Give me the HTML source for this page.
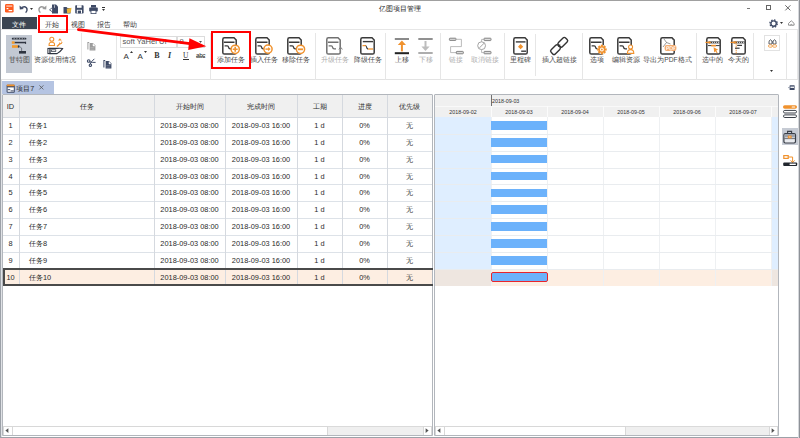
<!DOCTYPE html><html><head><meta charset="utf-8"><style>
*{box-sizing:border-box;margin:0;padding:0}
html,body{width:800px;height:438px;overflow:hidden;background:#fff}
body{position:relative;font-family:"Liberation Sans",sans-serif;font-size:7.2px;color:#333}
.a{position:absolute}
.t{position:absolute;white-space:nowrap;line-height:1}
.row{position:absolute;left:0;width:433px;height:16.87px}
.c{position:absolute;top:1px;white-space:nowrap;line-height:16.87px;text-align:center;color:#2a2a2a;font-size:7.4px}
.hl{position:absolute;height:1px;background:#dde2e8}
.vl{position:absolute;width:1px;background:#dde2e8}
.lbl{position:absolute;white-space:nowrap;line-height:1;color:#444;font-size:7.2px;top:56px}
.dis{color:#aaa}
.sep{position:absolute;width:1px;background:#e6e6e6;top:33px;height:45px}
svg{position:absolute;overflow:visible}
</style></head><body>
<div class="a" style="left:0;top:0;width:800px;height:1px;background:#a0a0a0"></div>
<div class="a" style="left:0;top:0;width:1px;height:438px;background:#9ca1a8"></div><div class="a" style="left:1px;top:80px;width:1px;height:358px;background:#e0e2e6"></div>
<div class="a" style="left:0;top:437px;width:800px;height:1px;background:#9ca1a8"></div>
<div class="t" style="left:379px;top:6px;font-size:6.8px;color:#222">亿图项目管理</div>
<div class="a" style="left:2px;top:17px;width:35px;height:13px;background:#3b4552"></div>
<div class="t" style="left:12px;top:20.7px;color:#fff;font-size:7px">文件</div>
<div class="t" style="left:45px;top:20.7px;color:#333;font-size:7px">开始</div>
<div class="t" style="left:71px;top:20.7px;color:#333;font-size:7px">视图</div>
<div class="t" style="left:97px;top:20.7px;color:#333;font-size:7px">报告</div>
<div class="t" style="left:123px;top:20.7px;color:#333;font-size:7px">帮助</div>
<div class="a" style="left:1px;top:29px;width:799px;height:1px;background:#e6e6e6"></div>
<div class="a" style="left:1px;top:79px;width:799px;height:1px;background:#e3e3e3"></div>
<div class="a" style="left:81.0px;top:33px;width:1px;height:47px;background:#e6e6e6"></div>
<div class="a" style="left:115.5px;top:33px;width:1px;height:47px;background:#e6e6e6"></div>
<div class="a" style="left:209.5px;top:33px;width:1px;height:47px;background:#e6e6e6"></div>
<div class="a" style="left:314.5px;top:33px;width:1px;height:47px;background:#e6e6e6"></div>
<div class="a" style="left:384.5px;top:33px;width:1px;height:47px;background:#e6e6e6"></div>
<div class="a" style="left:439.5px;top:33px;width:1px;height:47px;background:#e6e6e6"></div>
<div class="a" style="left:503.5px;top:33px;width:1px;height:47px;background:#e6e6e6"></div>
<div class="a" style="left:534.5px;top:34px;width:1px;height:42px;background:#e6e6e6"></div>
<div class="a" style="left:581.5px;top:33px;width:1px;height:47px;background:#e6e6e6"></div>
<div class="a" style="left:695.5px;top:33px;width:1px;height:47px;background:#e6e6e6"></div>
<div class="a" style="left:753.0px;top:33px;width:1px;height:47px;background:#e6e6e6"></div>
<div class="a" style="left:785.5px;top:33px;width:1px;height:47px;background:#e6e6e6"></div>
<div class="a" style="left:797px;top:30px;width:1px;height:49px;background:#e6e6e6"></div>
<div class="a" style="left:6px;top:35px;width:26px;height:38px;background:#c3c9d3"></div>
<svg style="left:11px;top:37px" width="17" height="18" viewBox="0 0 17 18"><rect x="0.8" y="0.8" width="14.6" height="1.8" rx="0.9" fill="#2e3440"/><path d="M2.6,1.7 H14" stroke="#fff" stroke-width="0.6" stroke-dasharray="1.2,1.5"/><rect x="3.4" y="4.8" width="11.6" height="1.5" fill="#2e3440"/><path d="M14.6,4.8 V7" stroke="#2e3440" stroke-width="0.9"/><rect x="0.8" y="4.3" width="2.8" height="2.5" fill="#f39a2b"/><rect x="1" y="8.2" width="6" height="2.6" fill="#f39a2b"/><rect x="6.8" y="8.2" width="1.8" height="2.6" rx="1" fill="#2e3440"/><path d="M8.6,9.6 L10.6,11 V14" stroke="#6a707a" stroke-width="0.9" fill="none"/><rect x="8" y="14" width="7" height="2.6" fill="#2e3440"/></svg>
<div class="t" style="left:-11px;width:60px;text-align:center;top:57px;font-size:6.7px;color:#4a4a4a">甘特图</div>
<svg style="left:44px;top:34px" width="22" height="22" viewBox="0 0 22 22"><circle cx="7.8" cy="5.2" r="2" fill="none" stroke="#f0922e" stroke-width="1.1"/><path d="M5.1,11.5 V10.2 Q5.1,8.2 7.8,8.2 Q10.5,8.2 10.5,10.2 V11.5 Z" fill="none" stroke="#f0922e" stroke-width="1.1"/><path d="M14,6.5 L15.9,4.3 L17.8,6.5 Z" fill="#f0922e"/><path d="M13,12.6 L16.4,9.2" stroke="#f0922e" stroke-width="1.4"/><path d="M15.6,8.6 L16.6,10 L18,9 L17.6,7.6" fill="none" stroke="#f0922e" stroke-width="1"/><path d="M6,14.4 H12.6 Q17,14 18.6,14.6 Q17,17 13,19.6 H6 Z" fill="#fff" stroke="#2e3440" stroke-width="1.1"/><rect x="3.4" y="13.9" width="2.8" height="6.2" fill="#2e3440"/><rect x="4.4" y="15" width="0.9" height="4" fill="#fff"/><rect x="7.4" y="15.8" width="4.4" height="1.6" fill="#fff" stroke="#2e3440" stroke-width="0.7"/></svg>
<div class="t" style="left:25px;width:60px;text-align:center;top:57px;font-size:6.7px;color:#4a4a4a">资源使用情况</div>
<svg style="left:87.2px;top:41px" width="10" height="10" viewBox="0 0 10 10"><path d="M0.4,1 H2.2 V2 H1.4 V8.4 H0.4 Z" fill="#9c9c9c"/><path d="M2.6,2 H6 L8.4,4.4 V9.6 H2.6 Z" fill="#9c9c9c"/><path d="M6,2.6 V4.9 H8" fill="#fff" stroke="#fff" stroke-width="0.5"/><path d="M3.4,6.6 H7.4 M3.4,8.2 H7.4" stroke="#fff" stroke-width="0.35" opacity="0.6"/></svg>
<svg style="left:102.6px;top:58.6px" width="10" height="10" viewBox="0 0 10 10"><path d="M0.4,1 H2.2 V2 H1.4 V8.4 H0.4 Z" fill="#3e4a66"/><path d="M2.6,2 H6 L8.4,4.4 V9.6 H2.6 Z" fill="#3e4a66"/><path d="M6,2.6 V4.9 H8" fill="#fff" stroke="#fff" stroke-width="0.5"/><path d="M3.4,6.6 H7.4 M3.4,8.2 H7.4" stroke="#fff" stroke-width="0.35" opacity="0.6"/></svg>
<svg style="left:87px;top:58.4px" width="10" height="9" viewBox="0 0 10 9"><circle cx="1.7" cy="3" r="1.3" fill="none" stroke="#3e4a66" stroke-width="1.1"/><circle cx="3.4" cy="7.2" r="1.2" fill="none" stroke="#3e4a66" stroke-width="1.1"/><path d="M2.6,3.8 Q5,4.6 8.6,4.4 M3.2,6 L4.6,3.6 L7.4,0.8" stroke="#3e4a66" stroke-width="1" fill="none"/></svg>
<div class="a" style="left:120px;top:35.5px;width:57px;height:12px;border:1px solid #dcdcdc;background:#fff;overflow:hidden"><div class="t" style="left:1.5px;top:1.3px;font-size:7.6px;color:#555">soft YaHei UI</div></div>
<div class="a" style="left:176.5px;top:35.5px;width:28px;height:12px;border:1px solid #dcdcdc;background:#fff"><div class="t" style="left:2px;top:1.3px;font-size:7.6px;color:#555">9</div><svg style="left:21.5px;top:4.5px" width="4" height="3"><path d="M0,0 H3 L1.5,2 Z" fill="#555"/></svg></div>
<div class="t" style="left:123.5px;top:52.5px;font-size:8px;color:#333">A</div>
<svg style="left:130px;top:50.8px" width="4" height="3" viewBox="0 0 4 3"><path d="M0,2 H3 L1.5,0 Z" fill="#333"/></svg>
<div class="t" style="left:137.5px;top:52.5px;font-size:8px;color:#333">A</div>
<svg style="left:144px;top:50.8px" width="4" height="3" viewBox="0 0 4 3"><path d="M0,0 H3 L1.5,2 Z" fill="#333"/></svg>
<div class="t" style="left:154.3px;top:52px;font-size:8px;color:#333;font-weight:bold;font-family:'Liberation Serif',serif">B</div>
<div class="t" style="left:168px;top:52px;font-size:8px;color:#333;font-weight:bold;font-style:italic;font-family:'Liberation Serif',serif">I</div>
<div class="t" style="left:183px;top:51.5px;font-size:7.5px;color:#333;font-family:'Liberation Serif',serif">U</div>
<div class="a" style="left:183px;top:58.6px;width:5.5px;height:0.7px;background:#333"></div>
<div class="t" style="left:196px;top:53px;font-size:6.4px;color:#333;letter-spacing:-0.4px">abc</div>
<div class="a" style="left:196px;top:56px;width:9px;height:0.6px;background:#777"></div>
<svg style="left:222px;top:37.3px" width="16" height="18" viewBox="0 0 16 18"><path d="M2.4,0.8 H12 L14.2,3 V15.4 Q14.2,17 12.6,17 H2.4 Q0.8,17 0.8,15.4 V2.4 Q0.8,0.8 2.4,0.8 Z" fill="#fff" stroke="#3a3a3a" stroke-width="1.5"/><path d="M2.6,6 V5.2 H11.8 V6" stroke="#3a3a3a" stroke-width="1.4" fill="none"/><path d="M2.6,8.8 H5.2 Q6.4,8.8 6.6,10.4 Q6.8,11.8 8.2,11.8 H10" stroke="#3a3a3a" stroke-width="1.3" fill="none"/><circle cx="13.2" cy="12.3" r="4.1" fill="#fff" stroke="#f0922e" stroke-width="1.5"/><path d="M13.2,9.8 V14.8 M10.7,12.3 H15.7" stroke="#f0922e" stroke-width="1.6"/></svg>
<div class="t" style="left:200.5px;width:60px;text-align:center;top:57px;font-size:6.7px;color:#4a4a4a">添加任务</div>
<svg style="left:254.5px;top:37.3px" width="16" height="18" viewBox="0 0 16 18"><path d="M2.4,0.8 H12 L14.2,3 V15.4 Q14.2,17 12.6,17 H2.4 Q0.8,17 0.8,15.4 V2.4 Q0.8,0.8 2.4,0.8 Z" fill="#fff" stroke="#3a3a3a" stroke-width="1.5"/><path d="M2.6,6 V5.2 H11.8 V6" stroke="#3a3a3a" stroke-width="1.4" fill="none"/><path d="M2.6,8.8 H5.2 Q6.4,8.8 6.6,10.4 Q6.8,11.8 8.2,11.8 H10" stroke="#3a3a3a" stroke-width="1.3" fill="none"/><circle cx="13" cy="12.1" r="4.1" fill="#fff" stroke="#f0922e" stroke-width="1.5"/><path d="M10.4,12.1 H14.2" stroke="#f0922e" stroke-width="1.4"/><path d="M13.2,9.9 L15.6,12.1 L13.2,14.3 Z" fill="#f0922e"/></svg>
<div class="t" style="left:234px;width:60px;text-align:center;top:57px;font-size:6.7px;color:#4a4a4a">插入任务</div>
<svg style="left:287px;top:37.3px" width="16" height="18" viewBox="0 0 16 18"><path d="M2.4,0.8 H12 L14.2,3 V15.4 Q14.2,17 12.6,17 H2.4 Q0.8,17 0.8,15.4 V2.4 Q0.8,0.8 2.4,0.8 Z" fill="#fff" stroke="#3a3a3a" stroke-width="1.5"/><path d="M2.6,6 V5.2 H11.8 V6" stroke="#3a3a3a" stroke-width="1.4" fill="none"/><path d="M2.6,8.8 H5.2 Q6.4,8.8 6.6,10.4 Q6.8,11.8 8.2,11.8 H10" stroke="#3a3a3a" stroke-width="1.3" fill="none"/><circle cx="13.5" cy="12.3" r="4.1" fill="#fff" stroke="#f0922e" stroke-width="1.5"/><path d="M11,12.3 H16" stroke="#f0922e" stroke-width="1.8"/></svg>
<div class="t" style="left:265.5px;width:60px;text-align:center;top:57px;font-size:6.7px;color:#4a4a4a">移除任务</div>
<svg style="left:325.8px;top:37.3px" width="16" height="18" viewBox="0 0 16 18"><path d="M2.4,0.8 H12 L14.2,3 V15.4 Q14.2,17 12.6,17 H2.4 Q0.8,17 0.8,15.4 V2.4 Q0.8,0.8 2.4,0.8 Z" fill="#fff" stroke="#707070" stroke-width="1.5"/><path d="M2.6,6 V5.2 H11.8 V6" stroke="#707070" stroke-width="1.4" fill="none"/><path d="M2.6,8.8 H5.2 Q6.4,8.8 6.6,10.4 Q6.8,11.8 8.2,11.8 H10" stroke="#707070" stroke-width="1.3" fill="none"/><path d="M14.6,16.5 V10.8" stroke="#808080" stroke-width="1"/><path d="M12.8,12.4 L14.6,10.2 L16.4,12.4" stroke="#808080" stroke-width="1" fill="none"/></svg>
<div class="t" style="left:304.5px;width:60px;text-align:center;top:57px;font-size:6.7px;color:#acacac">升级任务</div>
<svg style="left:359.5px;top:37.3px" width="16" height="18" viewBox="0 0 16 18"><path d="M2.4,0.8 H12 L14.2,3 V15.4 Q14.2,17 12.6,17 H2.4 Q0.8,17 0.8,15.4 V2.4 Q0.8,0.8 2.4,0.8 Z" fill="#fff" stroke="#3a3a3a" stroke-width="1.5"/><path d="M2.8,4.6 H13" stroke="#3a3a3a" stroke-width="1.4"/><path d="M2.5,8.6 H6" stroke="#f0922e" stroke-width="1.3"/><path d="M6,8.6 L7.2,12 H8" stroke="#3a3a3a" stroke-width="1"/><path d="M8,12 H13" stroke="#f0922e" stroke-width="1.3"/></svg>
<div class="t" style="left:337.5px;width:60px;text-align:center;top:57px;font-size:6.7px;color:#4a4a4a">降级任务</div>
<svg style="left:394px;top:37px" width="16" height="18" viewBox="0 0 16 18"><rect x="0.8" y="1.2" width="14.2" height="1.6" fill="#6e6e6e"/><path d="M3.8,8 L7.9,3.6 L12,8 Z" fill="#f0922e"/><rect x="6.9" y="7" width="2" height="7.4" fill="#f0922e"/><rect x="0.8" y="15.2" width="14.2" height="2" fill="#222"/></svg>
<div class="t" style="left:372px;width:60px;text-align:center;top:57px;font-size:6.7px;color:#4a4a4a">上移</div>
<svg style="left:418px;top:37px" width="16" height="18" viewBox="0 0 16 18"><rect x="0.3" y="1.2" width="14.4" height="1.6" fill="#777"/><rect x="6.5" y="4" width="2" height="6.5" fill="#bdbdbd"/><path d="M3.4,9.5 L7.5,14 L11.6,9.5 Z" fill="#bdbdbd"/><rect x="0.3" y="15.2" width="14.4" height="1.6" fill="#999"/></svg>
<div class="t" style="left:396px;width:60px;text-align:center;top:57px;font-size:6.7px;color:#acacac">下移</div>
<svg style="left:448px;top:37px" width="17" height="18" viewBox="0 0 17 18"><rect x="1.4" y="1.2" width="6.6" height="2.2" rx="0.6" fill="#ddd" stroke="#777" stroke-width="0.9"/><path d="M8,2.3 H13.4 V9.6 H2.6 V15.6 H8.3" stroke="#aaa" stroke-width="0.8" fill="none"/><rect x="8.3" y="14.4" width="7" height="2.4" rx="0.6" fill="#ddd" stroke="#777" stroke-width="0.9"/></svg>
<div class="t" style="left:426px;width:60px;text-align:center;top:57px;font-size:6.7px;color:#acacac">链接</div>
<svg style="left:475px;top:37px" width="18" height="18" viewBox="0 0 18 18"><rect x="9" y="1.2" width="7" height="2.4" rx="0.6" fill="#ddd" stroke="#777" stroke-width="0.9"/><rect x="9" y="14.4" width="7" height="2.4" rx="0.6" fill="#ddd" stroke="#777" stroke-width="0.9"/><path d="M9,2.4 H6.6 V4.8 M6.6,12.6 V15.6 H9" stroke="#aaa" stroke-width="0.8" fill="none"/><circle cx="6.6" cy="8.7" r="3.9" fill="none" stroke="#999" stroke-width="0.9"/><path d="M4.2,11.1 L9,6.3" stroke="#999" stroke-width="0.9"/></svg>
<div class="t" style="left:454.5px;width:60px;text-align:center;top:57px;font-size:6.7px;color:#acacac">取消链接</div>
<svg style="left:512.5px;top:37.3px" width="16" height="18" viewBox="0 0 16 18"><path d="M2.4,0.8 H12 L14.2,3 V15.4 Q14.2,17 12.6,17 H2.4 Q0.8,17 0.8,15.4 V2.4 Q0.8,0.8 2.4,0.8 Z" fill="#fff" stroke="#3a3a3a" stroke-width="1.5"/><path d="M2.8,4.9 H12.5" stroke="#3a3a3a" stroke-width="1.4"/><path d="M7.6,7.1 L10.2,9.7 L7.6,12.3 L5,9.7 Z" fill="#f0922e"/><path d="M8.2,14.2 H13" stroke="#3a3a3a" stroke-width="1.4"/></svg>
<div class="t" style="left:490px;width:60px;text-align:center;top:57px;font-size:6.7px;color:#4a4a4a">里程碑</div>
<svg style="left:550px;top:37px" width="20" height="19" viewBox="0 0 20 19"><g fill="none" stroke="#333" stroke-width="1.4"><rect x="9.9" y="0.3" width="5.8" height="10" rx="1.8" transform="rotate(45 12.8 5.3)"/><rect x="2.6" y="7.6" width="5.8" height="10" rx="1.8" transform="rotate(45 5.5 12.6)"/></g><path d="M8.2,9.6 L10.2,7.6" stroke="#333" stroke-width="1.2"/></svg>
<div class="t" style="left:529px;width:60px;text-align:center;top:57px;font-size:6.7px;color:#4a4a4a">插入超链接</div>
<svg style="left:589px;top:37.3px" width="16" height="18" viewBox="0 0 16 18"><path d="M2.4,0.8 H12 L14.2,3 V15.4 Q14.2,17 12.6,17 H2.4 Q0.8,17 0.8,15.4 V2.4 Q0.8,0.8 2.4,0.8 Z" fill="#fff" stroke="#3a3a3a" stroke-width="1.5"/><path d="M2.6,6 V5.2 H11.8 V6" stroke="#3a3a3a" stroke-width="1.4" fill="none"/><path d="M2.6,8.8 H5.2 Q6.4,8.8 6.6,10.4 Q6.8,11.8 8.2,11.8 H10" stroke="#3a3a3a" stroke-width="1.3" fill="none"/><circle cx="12.9" cy="12.5" r="4.6" fill="#fff"/><rect x="11.80" y="7.70" width="2.2" height="2.2" fill="#f0922e" transform="rotate(0 12.9 12.5)"/><rect x="11.80" y="7.70" width="2.2" height="2.2" fill="#f0922e" transform="rotate(45 12.9 12.5)"/><rect x="11.80" y="7.70" width="2.2" height="2.2" fill="#f0922e" transform="rotate(90 12.9 12.5)"/><rect x="11.80" y="7.70" width="2.2" height="2.2" fill="#f0922e" transform="rotate(135 12.9 12.5)"/><rect x="11.80" y="7.70" width="2.2" height="2.2" fill="#f0922e" transform="rotate(180 12.9 12.5)"/><rect x="11.80" y="7.70" width="2.2" height="2.2" fill="#f0922e" transform="rotate(225 12.9 12.5)"/><rect x="11.80" y="7.70" width="2.2" height="2.2" fill="#f0922e" transform="rotate(270 12.9 12.5)"/><rect x="11.80" y="7.70" width="2.2" height="2.2" fill="#f0922e" transform="rotate(315 12.9 12.5)"/><circle cx="12.9" cy="12.5" r="3.3" fill="#f0922e"/><circle cx="12.9" cy="12.5" r="1.9" fill="#fff"/><circle cx="12.9" cy="12.5" r="0.9" fill="#f0922e"/></svg>
<div class="t" style="left:567px;width:60px;text-align:center;top:57px;font-size:6.7px;color:#4a4a4a">选项</div>
<svg style="left:617px;top:37.3px" width="16" height="18" viewBox="0 0 16 18"><path d="M2.4,0.8 H12 L14.2,3 V15.4 Q14.2,17 12.6,17 H2.4 Q0.8,17 0.8,15.4 V2.4 Q0.8,0.8 2.4,0.8 Z" fill="#fff" stroke="#3a3a3a" stroke-width="1.5"/><path d="M2.6,6 V5.2 H11.8 V6" stroke="#3a3a3a" stroke-width="1.4" fill="none"/><path d="M2.6,8.8 H5.2 Q6.4,8.8 6.6,10.4 Q6.8,11.8 8.2,11.8 H10" stroke="#3a3a3a" stroke-width="1.3" fill="none"/><circle cx="13.6" cy="10" r="2" fill="#fff" stroke="#f0922e" stroke-width="1.1"/><path d="M10.4,16.4 Q10.4,12.6 13.6,12.6 Q16.8,12.6 16.8,16.4 Z" fill="#fff" stroke="#f0922e" stroke-width="1.1"/></svg>
<div class="t" style="left:595.5px;width:60px;text-align:center;top:57px;font-size:6.7px;color:#4a4a4a">编辑资源</div>
<svg style="left:659.5px;top:37.3px" width="16" height="18" viewBox="0 0 16 18"><path d="M2.4,0.8 H12 L14.2,3 V15.4 Q14.2,17 12.6,17 H2.4 Q0.8,17 0.8,15.4 V2.4 Q0.8,0.8 2.4,0.8 Z" fill="#fff" stroke="#3a3a3a" stroke-width="1.5"/><path d="M4,2 L6.5,5.5 L10.5,7 M6.5,5.5 L3,10" stroke="#555" stroke-width="0.6" fill="none"/><rect x="4.6" y="7.9" width="11.8" height="6" rx="2" fill="#f4ad72"/><path d="M6.6,13 V9.6 H8.6 V11.4 H6.6 M9.8,13 V9.6 H11.2 Q12.6,9.6 12.6,11.3 Q12.6,13 11.2,13 Z M13.8,13 V9.6 H15.4 M13.8,11.3 H15" stroke="#fff" stroke-width="0.7" fill="none"/><circle cx="13" cy="2.4" r="0.5" fill="#555"/></svg>
<div class="t" style="left:637.5px;width:60px;text-align:center;top:57px;font-size:6.7px;color:#4a4a4a">导出为PDF格式</div>
<svg style="left:705.5px;top:37.3px" width="16" height="18" viewBox="0 0 16 18"><path d="M2.4,0.8 H12 L14.2,3 V15.4 Q14.2,17 12.6,17 H2.4 Q0.8,17 0.8,15.4 V2.4 Q0.8,0.8 2.4,0.8 Z" fill="#fff" stroke="#3a3a3a" stroke-width="1.5"/><path d="M2.4,5.4 H13.6" stroke="#3a3a3a" stroke-width="2"/><path d="M6,5.4 H13.2" stroke="#fff" stroke-width="0.8" stroke-dasharray="1.1,0.9"/><path d="M-0.6,5.4 H3.6" stroke="#f0922e" stroke-width="1.2"/><path d="M5.4,5.4 L2.8,3.8 V7 Z" fill="#f0922e"/><path d="M2,8.6 H13.8" stroke="#3a3a3a" stroke-width="1"/><path d="M5.2,8.6 H10" stroke="#f0922e" stroke-width="1.6"/><path d="M7.6,10.2 L12.2,12.8 L10.2,13.4 L11.6,15.6 L10.8,16.2 L9.4,14.2 L8.2,15.6 Z" fill="#f0922e"/></svg>
<div class="t" style="left:682.5px;width:60px;text-align:center;top:57px;font-size:6.7px;color:#4a4a4a">选中的</div>
<svg style="left:731px;top:37.3px" width="16" height="18" viewBox="0 0 16 18"><path d="M2.4,0.8 H12 L14.2,3 V15.4 Q14.2,17 12.6,17 H2.4 Q0.8,17 0.8,15.4 V2.4 Q0.8,0.8 2.4,0.8 Z" fill="#fff" stroke="#3a3a3a" stroke-width="1.5"/><path d="M2.4,5.4 H13.6" stroke="#3a3a3a" stroke-width="2"/><path d="M6,5.4 H13.2" stroke="#fff" stroke-width="0.8" stroke-dasharray="1.1,0.9"/><path d="M-0.6,5.4 H3.6" stroke="#f0922e" stroke-width="1.2"/><path d="M5.4,5.4 L2.8,3.8 V7 Z" fill="#f0922e"/><path d="M5.2,4 V16.4" stroke="#f0922e" stroke-width="0.9" stroke-dasharray="1.6,0.6"/><path d="M6.2,8.4 H11" stroke="#3a3a3a" stroke-width="1.2"/><path d="M4,11.2 H8.6" stroke="#3a3a3a" stroke-width="1.2"/></svg>
<div class="t" style="left:708.5px;width:60px;text-align:center;top:57px;font-size:6.7px;color:#4a4a4a">今天的</div>
<div class="a" style="left:764px;top:35px;width:16px;height:16px;border:1px solid #e2e2e2"></div>
<svg style="left:767.5px;top:38.5px" width="10" height="10" viewBox="0 0 10 10"><path d="M1,5 V3 Q1,1.8 2,1 L2.5,0.7 L3,1 Q4,1.8 4,3 V5 Z M5,5 V3 Q5,1.8 6,1 L6.5,0.7 L7,1 Q8,1.8 8,3 V5 Z" fill="#fff" stroke="#4a4f58" stroke-width="0.9"/><path d="M4,3 H5" stroke="#4a4f58" stroke-width="1.2"/><rect x="0.5" y="5.8" width="3.8" height="2.4" rx="1.1" fill="#fff" stroke="#f0922e" stroke-width="0.8"/><rect x="4.7" y="5.8" width="3.8" height="2.4" rx="1.1" fill="#fff" stroke="#f0922e" stroke-width="0.8"/></svg>
<svg style="left:769.5px;top:70px" width="4" height="3" viewBox="0 0 4 3"><path d="M0,0 H3 L1.5,2 Z" fill="#333"/></svg>
<svg style="left:5px;top:3.5px" width="9" height="9" viewBox="0 0 9 9"><rect x="0" y="0" width="8.6" height="8.6" rx="1.4" fill="#fd5b1f"/><rect x="1.3" y="1.6" width="6" height="0.9" fill="#fff"/><rect x="1.6" y="4" width="1.8" height="1.2" fill="#fff"/><rect x="3.6" y="6" width="3.6" height="1.2" fill="#fff"/></svg>
<svg style="left:19px;top:4px" width="10" height="9" viewBox="0 0 10 9"><path d="M2.5,3.6 Q7.4,1.5 8,5 Q8.4,7.4 6.6,8.6" stroke="#3e4a66" stroke-width="1.5" fill="none"/><path d="M0.5,1.4 L0.8,5.6 L4.8,5 Z" fill="#3e4a66"/></svg>
<svg style="left:30px;top:8px" width="4" height="3" viewBox="0 0 4 3"><path d="M0,0 H3 L1.5,2 Z" fill="#333"/></svg>
<svg style="left:37px;top:4px" width="10" height="9" viewBox="0 0 10 9"><path d="M7.5,3.6 Q2.6,1.5 2,5 Q1.6,7.4 3.4,8.6" stroke="#9a9a9a" stroke-width="1.5" fill="none"/><path d="M9.5,1.4 L9.2,5.6 L5.2,5 Z" fill="#9a9a9a"/></svg>
<svg style="left:49px;top:4px" width="10" height="10" viewBox="0 0 10 10"><path d="M3,0.5 H7 L9,2.5 V9.5 H3 Z" fill="#3e4a66"/><path d="M0.5,5.8 L3.5,3.6 V8 Z" fill="#fff" stroke="#3e4a66" stroke-width="0.8"/><path d="M5.5,1.2 V3.8" stroke="#fff" stroke-width="0.6"/></svg>
<svg style="left:62.5px;top:4.5px" width="9" height="9" viewBox="0 0 9 9"><path d="M0.5,2 H3.5 L4.5,3 H7.5 V8.5 H0.5 Z" fill="#3e4a66"/><path d="M3.8,3.8 L8.5,2.8 L7.8,7.4 L4.2,8.5 Z" fill="#e8b43a"/></svg>
<svg style="left:75px;top:5px" width="9" height="9" viewBox="0 0 9 9"><rect x="0.2" y="0.2" width="8.4" height="8.4" rx="0.8" fill="#3e4a66"/><rect x="2" y="0.2" width="4.6" height="2.6" fill="#fff"/><rect x="1.8" y="4.8" width="5.2" height="3.6" fill="#fff"/><rect x="2.8" y="5.6" width="3.2" height="2.8" fill="#3e4a66"/></svg>
<svg style="left:88.5px;top:5px" width="9" height="9" viewBox="0 0 9 9"><rect x="2" y="0" width="5" height="2.6" fill="#3e4a66"/><rect x="0.2" y="2.6" width="8.6" height="4" rx="0.8" fill="#3e4a66"/><rect x="2" y="5.4" width="5" height="3.2" fill="#fff" stroke="#3e4a66" stroke-width="0.8"/></svg>
<div class="a" style="left:101.5px;top:7px;width:3px;height:0.8px;background:#333"></div>
<svg style="left:101.5px;top:8.8px" width="4" height="3" viewBox="0 0 4 3"><path d="M0,0 H3 L1.5,2 Z" fill="#333"/></svg>
<div class="a" style="left:746.5px;top:8.3px;width:3.6px;height:1.2px;background:#777"></div>
<div class="a" style="left:765.5px;top:5px;width:5.6px;height:5.4px;border:0.8px solid #666;border-top-width:1.2px"></div>
<svg style="left:784.6px;top:4.8px" width="6" height="6" viewBox="0 0 6 6"><path d="M0.3,0.3 L5.4,5.4 M5.4,0.3 L0.3,5.4" stroke="#555" stroke-width="0.9"/></svg>
<svg style="left:768.5px;top:19px" width="10" height="10" viewBox="0 0 10 10"><circle cx="4.6" cy="4.6" r="2.7" fill="none" stroke="#3e4a66" stroke-width="1.4"/><circle cx="4.6" cy="4.6" r="3.7" fill="none" stroke="#3e4a66" stroke-width="1.3" stroke-dasharray="1.5,1.4"/></svg>
<svg style="left:780px;top:22.2px" width="4" height="3" viewBox="0 0 4 3"><path d="M0,0 H3 L1.5,2 Z" fill="#333"/></svg>
<svg style="left:788px;top:19.5px" width="7" height="6" viewBox="0 0 7 6"><path d="M0.5,5.2 V3.4 L3.3,0.8 L6.1,3.4 V5.2 Z" fill="none" stroke="#777" stroke-width="0.8"/><path d="M2.2,5.2 Q3.3,3.4 4.4,5.2" fill="none" stroke="#777" stroke-width="0.7"/></svg>
<div class="a" style="left:38px;top:15px;width:30px;height:17.8px;border:2.7px solid #f00"></div>
<div class="a" style="left:2px;top:81px;width:51.5px;height:13px;background:#b5c4e2"></div>
<div class="t" style="left:16.3px;top:84.5px;font-size:7.2px;color:#2a2a2a">项目7</div>
<svg style="left:38.6px;top:85.4px" width="5" height="5" viewBox="0 0 5 5"><path d="M0.4,0.4 L4.4,4.4 M4.4,0.4 L0.4,4.4" stroke="#555" stroke-width="0.8"/></svg>
<div class="a" style="left:2px;top:94px;width:431px;height:342px;border:1px solid #b2b6bc;border-radius:1px 1px 0 0"></div>
<div class="a" style="left:3px;top:95px;width:429px;height:22px;background:#f0f0f0"></div>
<div class="hl" style="left:3px;top:117px;width:429px;background:#d5d9df"></div>
<div class="row" style="top:95px;height:22px"><span class="c" style="left:2px;width:17px;line-height:22px">ID</span><span class="c" style="left:19px;width:135px;line-height:22px">任务</span><span class="c" style="left:154px;width:71px;line-height:22px">开始时间</span><span class="c" style="left:225px;width:72px;line-height:22px">完成时间</span><span class="c" style="left:297px;width:45px;line-height:22px">工期</span><span class="c" style="left:342px;width:45px;line-height:22px">进度</span><span class="c" style="left:387px;width:45px;line-height:22px">优先级</span></div>
<div class="a" style="left:3px;top:268.83px;width:429px;height:16.87px;background:#fdeee2"></div>
<div class="hl" style="left:3px;top:133.87px;width:429px"></div>
<div class="hl" style="left:3px;top:150.74px;width:429px"></div>
<div class="hl" style="left:3px;top:167.61px;width:429px"></div>
<div class="hl" style="left:3px;top:184.48px;width:429px"></div>
<div class="hl" style="left:3px;top:201.35px;width:429px"></div>
<div class="hl" style="left:3px;top:218.22px;width:429px"></div>
<div class="hl" style="left:3px;top:235.09px;width:429px"></div>
<div class="hl" style="left:3px;top:251.96px;width:429px"></div>
<div class="hl" style="left:3px;top:268.83px;width:429px"></div>
<div class="vl" style="left:19px;top:95px;height:190.70px;background:#d5d9df"></div>
<div class="vl" style="left:154px;top:95px;height:190.70px;background:#d5d9df"></div>
<div class="vl" style="left:225px;top:95px;height:190.70px;background:#d5d9df"></div>
<div class="vl" style="left:297px;top:95px;height:190.70px;background:#d5d9df"></div>
<div class="vl" style="left:342px;top:95px;height:190.70px;background:#d5d9df"></div>
<div class="vl" style="left:387px;top:95px;height:190.70px;background:#d5d9df"></div>
<div class="a" style="left:2.5px;top:268.33px;width:430px;height:17.87px;border:2px solid #4a4a4a;border-right:none"></div>
<div class="row" style="top:117.00px"><span class="c" style="left:2px;width:17px">1</span><span class="c" style="left:29px;text-align:left">任务1</span><span class="c" style="left:154px;width:71px">2018-09-03 08:00</span><span class="c" style="left:225px;width:72px">2018-09-03 16:00</span><span class="c" style="left:297px;width:45px">1 d</span><span class="c" style="left:342px;width:45px">0%</span><span class="c" style="left:387px;width:45px">无</span></div>
<div class="row" style="top:133.87px"><span class="c" style="left:2px;width:17px">2</span><span class="c" style="left:29px;text-align:left">任务2</span><span class="c" style="left:154px;width:71px">2018-09-03 08:00</span><span class="c" style="left:225px;width:72px">2018-09-03 16:00</span><span class="c" style="left:297px;width:45px">1 d</span><span class="c" style="left:342px;width:45px">0%</span><span class="c" style="left:387px;width:45px">无</span></div>
<div class="row" style="top:150.74px"><span class="c" style="left:2px;width:17px">3</span><span class="c" style="left:29px;text-align:left">任务3</span><span class="c" style="left:154px;width:71px">2018-09-03 08:00</span><span class="c" style="left:225px;width:72px">2018-09-03 16:00</span><span class="c" style="left:297px;width:45px">1 d</span><span class="c" style="left:342px;width:45px">0%</span><span class="c" style="left:387px;width:45px">无</span></div>
<div class="row" style="top:167.61px"><span class="c" style="left:2px;width:17px">4</span><span class="c" style="left:29px;text-align:left">任务4</span><span class="c" style="left:154px;width:71px">2018-09-03 08:00</span><span class="c" style="left:225px;width:72px">2018-09-03 16:00</span><span class="c" style="left:297px;width:45px">1 d</span><span class="c" style="left:342px;width:45px">0%</span><span class="c" style="left:387px;width:45px">无</span></div>
<div class="row" style="top:184.48px"><span class="c" style="left:2px;width:17px">5</span><span class="c" style="left:29px;text-align:left">任务5</span><span class="c" style="left:154px;width:71px">2018-09-03 08:00</span><span class="c" style="left:225px;width:72px">2018-09-03 16:00</span><span class="c" style="left:297px;width:45px">1 d</span><span class="c" style="left:342px;width:45px">0%</span><span class="c" style="left:387px;width:45px">无</span></div>
<div class="row" style="top:201.35px"><span class="c" style="left:2px;width:17px">6</span><span class="c" style="left:29px;text-align:left">任务6</span><span class="c" style="left:154px;width:71px">2018-09-03 08:00</span><span class="c" style="left:225px;width:72px">2018-09-03 16:00</span><span class="c" style="left:297px;width:45px">1 d</span><span class="c" style="left:342px;width:45px">0%</span><span class="c" style="left:387px;width:45px">无</span></div>
<div class="row" style="top:218.22px"><span class="c" style="left:2px;width:17px">7</span><span class="c" style="left:29px;text-align:left">任务7</span><span class="c" style="left:154px;width:71px">2018-09-03 08:00</span><span class="c" style="left:225px;width:72px">2018-09-03 16:00</span><span class="c" style="left:297px;width:45px">1 d</span><span class="c" style="left:342px;width:45px">0%</span><span class="c" style="left:387px;width:45px">无</span></div>
<div class="row" style="top:235.09px"><span class="c" style="left:2px;width:17px">8</span><span class="c" style="left:29px;text-align:left">任务8</span><span class="c" style="left:154px;width:71px">2018-09-03 08:00</span><span class="c" style="left:225px;width:72px">2018-09-03 16:00</span><span class="c" style="left:297px;width:45px">1 d</span><span class="c" style="left:342px;width:45px">0%</span><span class="c" style="left:387px;width:45px">无</span></div>
<div class="row" style="top:251.96px"><span class="c" style="left:2px;width:17px">9</span><span class="c" style="left:29px;text-align:left">任务9</span><span class="c" style="left:154px;width:71px">2018-09-03 08:00</span><span class="c" style="left:225px;width:72px">2018-09-03 16:00</span><span class="c" style="left:297px;width:45px">1 d</span><span class="c" style="left:342px;width:45px">0%</span><span class="c" style="left:387px;width:45px">无</span></div>
<div class="row" style="top:268.83px"><span class="c" style="left:2px;width:17px">10</span><span class="c" style="left:29px;text-align:left">任务10</span><span class="c" style="left:154px;width:71px">2018-09-03 08:00</span><span class="c" style="left:225px;width:72px">2018-09-03 16:00</span><span class="c" style="left:297px;width:45px">1 d</span><span class="c" style="left:342px;width:45px">0%</span><span class="c" style="left:387px;width:45px">无</span></div>
<div class="a" style="left:434px;top:94px;width:345px;height:342px;border:1px solid #b2b6bc;border-radius:1px 1px 0 0"></div>
<div class="a" style="left:435px;top:95px;width:343px;height:22px;background:#f0f0f0"></div>
<div class="a" style="left:435px;top:106px;width:343px;height:1px;background:#f9f9f9"></div>
<div class="a" style="left:491px;top:95px;width:1px;height:11px;background:#707070"></div>
<div class="t" style="left:492px;top:98.5px;font-size:5.35px;color:#333">2018-09-03</div>
<div class="a" style="left:435px;top:117px;width:56px;height:151.83px;background:#dfeeff"></div>
<div class="a" style="left:771px;top:117px;width:7px;height:151.83px;background:#dfeeff"></div>
<div class="a" style="left:435px;top:268.83px;width:343px;height:16.87px;background:#fdeee2"></div>
<div class="a" style="left:435px;top:268.83px;width:56px;height:16.87px;background:#eee6e0"></div>
<div class="a" style="left:771px;top:268.83px;width:7px;height:16.87px;background:#eee6e0"></div>
<div class="t" style="left:435px;top:110px;width:56px;text-align:center;font-size:5.35px;color:#333">2018-09-02</div>
<div class="t" style="left:491px;top:110px;width:56px;text-align:center;font-size:5.35px;color:#333">2018-09-03</div>
<div class="vl" style="left:491px;top:106px;height:11px;background:#fbfbfb"></div>
<div class="vl" style="left:491px;top:117px;height:168.70px;background:#eef0f2"></div>
<div class="t" style="left:547px;top:110px;width:56px;text-align:center;font-size:5.35px;color:#333">2018-09-04</div>
<div class="vl" style="left:547px;top:106px;height:11px;background:#fbfbfb"></div>
<div class="vl" style="left:547px;top:117px;height:168.70px;background:#eef0f2"></div>
<div class="t" style="left:603px;top:110px;width:56px;text-align:center;font-size:5.35px;color:#333">2018-09-05</div>
<div class="vl" style="left:603px;top:106px;height:11px;background:#fbfbfb"></div>
<div class="vl" style="left:603px;top:117px;height:168.70px;background:#eef0f2"></div>
<div class="t" style="left:659px;top:110px;width:56px;text-align:center;font-size:5.35px;color:#333">2018-09-06</div>
<div class="vl" style="left:659px;top:106px;height:11px;background:#fbfbfb"></div>
<div class="vl" style="left:659px;top:117px;height:168.70px;background:#eef0f2"></div>
<div class="t" style="left:715px;top:110px;width:56px;text-align:center;font-size:5.35px;color:#333">2018-09-07</div>
<div class="vl" style="left:715px;top:106px;height:11px;background:#fbfbfb"></div>
<div class="vl" style="left:715px;top:117px;height:168.70px;background:#eef0f2"></div>
<div class="vl" style="left:771px;top:106px;height:11px;background:#fbfbfb"></div>
<div class="vl" style="left:771px;top:117px;height:168.70px;background:#eef0f2"></div>
<div class="hl" style="left:435px;top:133.87px;width:343px;background:#e9ecef"></div>
<div class="hl" style="left:435px;top:150.74px;width:343px;background:#e9ecef"></div>
<div class="hl" style="left:435px;top:167.61px;width:343px;background:#e9ecef"></div>
<div class="hl" style="left:435px;top:184.48px;width:343px;background:#e9ecef"></div>
<div class="hl" style="left:435px;top:201.35px;width:343px;background:#e9ecef"></div>
<div class="hl" style="left:435px;top:218.22px;width:343px;background:#e9ecef"></div>
<div class="hl" style="left:435px;top:235.09px;width:343px;background:#e9ecef"></div>
<div class="hl" style="left:435px;top:251.96px;width:343px;background:#e9ecef"></div>
<div class="hl" style="left:435px;top:268.83px;width:343px;background:#e9ecef"></div>
<div class="a" style="left:491px;top:121.10px;width:56px;height:8.6px;background:#6cb2fb"></div>
<div class="a" style="left:491px;top:137.97px;width:56px;height:8.6px;background:#6cb2fb"></div>
<div class="a" style="left:491px;top:154.84px;width:56px;height:8.6px;background:#6cb2fb"></div>
<div class="a" style="left:491px;top:171.71px;width:56px;height:8.6px;background:#6cb2fb"></div>
<div class="a" style="left:491px;top:188.58px;width:56px;height:8.6px;background:#6cb2fb"></div>
<div class="a" style="left:491px;top:205.45px;width:56px;height:8.6px;background:#6cb2fb"></div>
<div class="a" style="left:491px;top:222.32px;width:56px;height:8.6px;background:#6cb2fb"></div>
<div class="a" style="left:491px;top:239.19px;width:56px;height:8.6px;background:#6cb2fb"></div>
<div class="a" style="left:491px;top:256.06px;width:56px;height:8.6px;background:#6cb2fb"></div>
<div class="a" style="left:490.5px;top:272.33px;width:57px;height:9.6px;background:#6cb2fb;border:1.4px solid #e8242c;border-radius:2px"></div>
<div class="a" style="left:211px;top:31px;width:40px;height:37.5px;border:2.8px solid #f00"></div>
<svg style="left:0px;top:0px" width="800" height="80" viewBox="0 0 800 80"><path d="M78.4,29.6 L190,43.6" stroke="#f00" stroke-width="2.8" stroke-linecap="round"/><path d="M189.4,38.3 L206.3,46.3 L188.2,49.9 Z" fill="#f00"/></svg>
<svg style="left:6px;top:83.5px" width="9.5" height="9.5" viewBox="0 0 9.5 9.5"><rect x="0.6" y="0.8" width="8.2" height="8" rx="1" fill="#3e4a66"/><rect x="1.6" y="3.4" width="6.2" height="4.4" fill="#fff"/><rect x="0.6" y="0.4" width="8.2" height="1.8" rx="0.9" fill="#f0922e"/><rect x="1.6" y="5.2" width="2.6" height="1" fill="#3e4a66"/><rect x="4.6" y="6.4" width="3.2" height="1" fill="#3e4a66"/></svg>
<div class="a" style="left:798px;top:0;width:1px;height:438px;background:#d6d8dc"></div>
<div class="a" style="left:799px;top:0;width:1px;height:438px;background:#8e9298"></div>
<svg style="left:787.5px;top:85px" width="7" height="6" viewBox="0 0 7 6"><rect x="1.6" y="0.2" width="5" height="4.8" rx="0.5" fill="#3e4a66"/><rect x="2.4" y="1.6" width="3.6" height="1.3" fill="#fff"/><path d="M0,2.6 H1.6" stroke="#8a92a6" stroke-width="0.8"/></svg>
<svg style="left:783px;top:104.5px" width="14.5" height="14" viewBox="0 0 14.5 14"><rect x="0" y="0.3" width="14" height="3.4" rx="1.7" fill="#f0922e"/><rect x="8.6" y="1.4" width="3.6" height="1.2" rx="0.6" fill="#fff"/><rect x="0.5" y="5.4" width="13" height="2.6" rx="1.3" fill="#fff" stroke="#3a3f48" stroke-width="1"/><rect x="0.5" y="9.9" width="13" height="2.6" rx="1.3" fill="#fff" stroke="#3a3f48" stroke-width="1"/></svg>
<div class="a" style="left:782px;top:128px;width:16px;height:17px;background:#c6cbd4"></div>
<svg style="left:783px;top:129.5px" width="14" height="14" viewBox="0 0 14 14"><path d="M4.6,3.6 V1.4 H8.6 V3.6" fill="none" stroke="#3a3f48" stroke-width="1.1"/><rect x="0.9" y="3.6" width="11.6" height="9.4" rx="1.4" fill="#e8eaee" stroke="#3a3f48" stroke-width="1.2"/><rect x="1.5" y="4.2" width="10.4" height="3.2" fill="#9aa0aa"/><path d="M1.5,8.6 H12" stroke="#3a3f48" stroke-width="0.7"/><rect x="4.8" y="5.6" width="3.8" height="2.8" fill="#f0922e"/><rect x="5.9" y="6.4" width="1.6" height="1.1" fill="#f7d2a8"/></svg>
<svg style="left:783px;top:155px" width="15" height="12" viewBox="0 0 15 12"><rect x="0.8" y="0.6" width="4.4" height="2.8" fill="#fff" stroke="#f0922e" stroke-width="1.2"/><path d="M5.2,2 H9.6 V6.8" stroke="#f0922e" stroke-width="1" fill="none"/><path d="M7.6,5.4 L9.6,7.6 L11.6,5.4" stroke="#f0922e" stroke-width="1" fill="none"/><rect x="0.2" y="7.6" width="14" height="3.4" rx="1" fill="#22272e"/><rect x="6.6" y="8.6" width="6.2" height="1.4" fill="#fff"/></svg>
<div class="a" style="left:3px;top:426px;width:429px;height:9px;background:#efefef;border-top:1px solid #dadada"></div>
<div class="a" style="left:3px;top:426px;width:9.5px;height:9px;background:#fff;border:1px solid #d8d8d8;border-bottom:none"></div>
<div class="a" style="left:12px;top:426px;width:316px;height:9px;background:#fff;border:1px solid #d8d8d8;border-bottom:none"></div>
<div class="a" style="left:422.5px;top:426px;width:9.5px;height:9px;background:#fff;border:1px solid #d8d8d8;border-bottom:none"></div>
<svg style="left:5.3px;top:428px" width="5" height="6" viewBox="0 0 5 6"><path d="M3.4,0.2 V5 L0.4,2.6 Z" fill="#555"/></svg>
<svg style="left:425px;top:428px" width="5" height="6" viewBox="0 0 5 6"><path d="M0.6,0.2 V5 L3.6,2.6 Z" fill="#555"/></svg>
<div class="a" style="left:435px;top:426px;width:343px;height:9px;background:#efefef;border-top:1px solid #dadada"></div>
<div class="a" style="left:435px;top:426px;width:9.5px;height:9px;background:#fff;border:1px solid #d8d8d8;border-bottom:none"></div>
<div class="a" style="left:444px;top:426px;width:182px;height:9px;background:#fff;border:1px solid #d8d8d8;border-bottom:none"></div>
<div class="a" style="left:768.5px;top:426px;width:9.5px;height:9px;background:#fff;border:1px solid #d8d8d8;border-bottom:none"></div>
<svg style="left:437.3px;top:428px" width="5" height="6" viewBox="0 0 5 6"><path d="M3.4,0.2 V5 L0.4,2.6 Z" fill="#555"/></svg>
<svg style="left:771px;top:428px" width="5" height="6" viewBox="0 0 5 6"><path d="M0.6,0.2 V5 L3.6,2.6 Z" fill="#555"/></svg>
</body></html>
